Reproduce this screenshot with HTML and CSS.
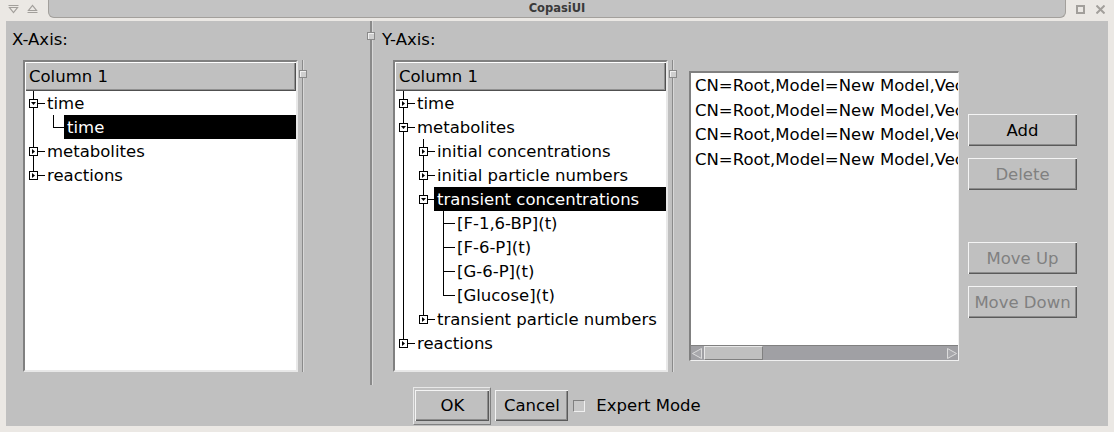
FILE: index.html
```html
<!DOCTYPE html>
<html>
<head>
<meta charset="utf-8">
<title>CopasiUI</title>
<link rel="stylesheet" href="styles.css">
</head>
<body>
<div class="window">
  <div class="titlebar">
    <div class="tb-side tb-left">
      <svg class="tb-icon" width="11" height="10" viewBox="0 0 11 10"><path d="M0.5 1.5h10M1.5 3.5h8l-4 5z" fill="none" stroke="#a29f9b" stroke-width="1.2"/></svg>
      <svg class="tb-icon" width="11" height="10" viewBox="0 0 11 10"><path d="M1.5 6.5h8l-4-5zM0.5 8.5h10" fill="none" stroke="#a29f9b" stroke-width="1.2"/></svg>
    </div>
    <div class="tb-tab"><span class="tb-title">CopasiUI</span></div>
    <div class="tb-side tb-right">
      <svg class="tb-icon" width="9" height="9" viewBox="0 0 9 9"><rect x="1" y="1" width="7" height="7" fill="none" stroke="#a29f9b" stroke-width="2"/></svg>
      <svg class="tb-icon" width="9" height="9" viewBox="0 0 9 9"><path d="M0.5 0.5l8 8M8.5 0.5l-8 8" stroke="#a29f9b" stroke-width="2"/></svg>
    </div>
  </div>
  <div class="frame">
    <div class="content">
      <div class="split-area">
        <div class="pane pane-x">
          <div class="axis-label">X-Axis:</div>
          <div class="pane-row">
            <div class="tree">
              <div class="tree-header">Column 1</div>
              <div class="tree-body">
                <div class="row">
                  <span class="g node first"><span class="box open"></span></span>
                  <span class="lbl">time</span>
                </div>
                <div class="row">
                  <span class="g pipe"></span>
                  <span class="g node last"></span>
                  <span class="lbl sel">time</span>
                </div>
                <div class="row">
                  <span class="g node"><span class="box closed"></span></span>
                  <span class="lbl">metabolites</span>
                </div>
                <div class="row">
                  <span class="g node last"><span class="box closed"></span></span>
                  <span class="lbl">reactions</span>
                </div>
              </div>
            </div>
            <div class="vhandle"><span class="knob"></span></div>
          </div>
        </div>
        <div class="split-handle"><span class="knob"></span></div>
        <div class="pane pane-y">
          <div class="axis-label">Y-Axis:</div>
          <div class="pane-row">
            <div class="tree">
              <div class="tree-header">Column 1</div>
              <div class="tree-body">
                <div class="row">
                  <span class="g node first"><span class="box closed"></span></span>
                  <span class="lbl">time</span>
                </div>
                <div class="row">
                  <span class="g node"><span class="box open"></span></span>
                  <span class="lbl">metabolites</span>
                </div>
                <div class="row">
                  <span class="g pipe"></span>
                  <span class="g node"><span class="box closed"></span></span>
                  <span class="lbl">initial concentrations</span>
                </div>
                <div class="row">
                  <span class="g pipe"></span>
                  <span class="g node"><span class="box closed"></span></span>
                  <span class="lbl">initial particle numbers</span>
                </div>
                <div class="row">
                  <span class="g pipe"></span>
                  <span class="g node"><span class="box open"></span></span>
                  <span class="lbl sel">transient concentrations</span>
                </div>
                <div class="row">
                  <span class="g pipe"></span>
                  <span class="g pipe"></span>
                  <span class="g node"></span>
                  <span class="lbl">[F-1,6-BP](t)</span>
                </div>
                <div class="row">
                  <span class="g pipe"></span>
                  <span class="g pipe"></span>
                  <span class="g node"></span>
                  <span class="lbl">[F-6-P](t)</span>
                </div>
                <div class="row">
                  <span class="g pipe"></span>
                  <span class="g pipe"></span>
                  <span class="g node"></span>
                  <span class="lbl">[G-6-P](t)</span>
                </div>
                <div class="row">
                  <span class="g pipe"></span>
                  <span class="g pipe"></span>
                  <span class="g node last"></span>
                  <span class="lbl">[Glucose](t)</span>
                </div>
                <div class="row">
                  <span class="g pipe"></span>
                  <span class="g node last"><span class="box closed"></span></span>
                  <span class="lbl">transient particle numbers</span>
                </div>
                <div class="row">
                  <span class="g node last"><span class="box closed"></span></span>
                  <span class="lbl">reactions</span>
                </div>
              </div>
            </div>
            <div class="vhandle"><span class="knob"></span></div>
            <div class="listbox">
              <div class="list-items">
                <div class="list-item"><span class="item-text">CN=Root,Model=New Model,Vector=Metabolites</span></div>
                <div class="list-item"><span class="item-text">CN=Root,Model=New Model,Vector=Metabolites</span></div>
                <div class="list-item"><span class="item-text">CN=Root,Model=New Model,Vector=Metabolites</span></div>
                <div class="list-item"><span class="item-text">CN=Root,Model=New Model,Vector=Metabolites</span></div>
              </div>
              <div class="hscroll">
                <span class="sb-arrow"><svg width="13" height="13" viewBox="0 0 13 13"><path d="M10.5 1.5v10l-9-5z" fill="#a8a8ac" stroke="#dcdcdc"/></svg></span>
                <span class="sb-slider"></span>
                <span class="sb-trough"></span>
                <span class="sb-arrow"><svg width="13" height="13" viewBox="0 0 13 13"><path d="M2.5 1.5v10l9-5z" fill="#a8a8ac" stroke="#dcdcdc"/></svg></span>
              </div>
            </div>
            <div class="side-buttons">
              <button class="btn">Add</button>
              <button class="btn disabled">Delete</button>
              <button class="btn disabled spaced">Move Up</button>
              <button class="btn disabled">Move Down</button>
            </div>
          </div>
        </div>
      </div>
      <div class="bottom-bar">
        <span class="default-frame"><button class="btn btn-ok">OK</button></span>
        <button class="btn btn-cancel">Cancel</button>
        <span class="check"></span>
        <span class="check-label">Expert Mode</span>
      </div>
    </div>
  </div>
</div>
</body>
</html>
```

FILE: styles.css
```css
* {
  box-sizing: border-box;
  margin: 0;
  padding: 0;
}

html, body {
  width: 1114px;
  height: 432px;
  overflow: hidden;
}

body {
  background: #c0c0c0;
  font-family: "DejaVu Sans", Verdana, sans-serif;
  font-size: 16.5px;
  color: #000;
}

.window {
  width: 1114px;
  height: 432px;
  display: flex;
  flex-direction: column;
  background: #ebe8e4;
}

/* ---------- title bar ---------- */
.titlebar {
  height: 21px;
  flex: none;
  display: flex;
}

.tb-side {
  width: 48px;
  flex: none;
  display: flex;
  align-items: center;
  padding-bottom: 3px;
}

.tb-left {
  padding-left: 8px;
  gap: 8px;
}

.tb-right {
  padding-left: 10px;
  gap: 11px;
}

.tb-icon {
  display: block;
  flex: none;
}

.tb-tab {
  flex: 1;
  height: 18px;
  background: #c3c3c3;
  border: 1px solid #a3a09c;
  border-top: none;
  border-radius: 0 0 6px 6px;
  display: flex;
  justify-content: center;
  align-items: center;
}

.tb-title {
  font-size: 11.5px;
  font-weight: bold;
  color: #3a3a3a;
  line-height: 17px;
}

/* ---------- frame ---------- */
.frame {
  flex: 1;
  display: flex;
  padding: 0 6px 6px 6px;
}

.content {
  flex: 1;
  background: #c0c0c0;
  display: flex;
  flex-direction: column;
}

.split-area {
  height: 364px;
  flex: none;
  display: flex;
}

.pane {
  padding: 6px 0 0 6px;
}

.pane-x {
  width: 360px;
  flex: none;
}

.pane-y {
  flex: 1;
}

.axis-label {
  height: 24px;
  line-height: 25px;
  white-space: nowrap;
}

.pane-row {
  display: flex;
  align-items: flex-start;
  margin: 9px 0 0 11px;
}

/* main splitter between X and Y */
.split-handle {
  width: 10px;
  flex: none;
  position: relative;
  display: flex;
  justify-content: center;
}

.split-handle::before {
  content: "";
  width: 2px;
  margin-left: -1px;
  height: 364px;
  background: #8a8a8a;
  box-shadow: 1px 0 0 #d8d8d8;
}

.knob {
  position: absolute;
  width: 8px;
  height: 8px;
  background: #cfcfcf;
  border: 1px solid #8a8a8a;
  box-shadow: inset 1px 1px 0 #f0f0f0;
}

.split-handle .knob {
  left: 1px;
  top: 11px;
}

/* small handle right of each tree */
.vhandle {
  width: 9px;
  height: 312px;
  flex: none;
  position: relative;
}

.vhandle::before {
  content: "";
  display: block;
  width: 1px;
  height: 312px;
  margin-left: 4px;
  background: #8a8a8a;
  box-shadow: 1px 0 0 #d8d8d8;
}

.vhandle .knob {
  left: 1px;
  top: 10px;
}

/* ---------- tree ---------- */
.tree {
  width: 275px;
  height: 312px;
  flex: none;
  background: #fff;
  border: 2px solid;
  border-color: #808080 #e8e8e8 #e8e8e8 #808080;
  display: flex;
  flex-direction: column;
  overflow: hidden;
}

.tree-header {
  height: 29px;
  line-height: 29px;
  flex: none;
  padding-left: 4px;
  background: #c0c0c0;
  box-shadow: inset 1px 1px 0 #ffffff, inset -1px -1px 0 #505050, inset -2px -2px 0 #909090;
  white-space: nowrap;
}

.tree-body {
  flex: 1;
}

.row {
  display: flex;
  height: 24px;
}

.g {
  width: 20px;
  height: 24px;
  flex: none;
  position: relative;
}

.pipe::before,
.node::before {
  content: "";
  position: absolute;
  left: 8px;
  top: 0;
  width: 1px;
  height: 24px;
  background: #000;
}

.node.last::before {
  height: 13px;
}

.node::after {
  content: "";
  position: absolute;
  left: 8px;
  top: 12px;
  width: 12px;
  height: 1px;
  background: #000;
}

.box {
  position: absolute;
  left: 4px;
  top: 8px;
  width: 9px;
  height: 9px;
  z-index: 2;
  background: #fff;
  border: 1px solid #000;
}

/* the arrow inside the expander box */
.box::after {
  content: "";
  position: absolute;
  background: #000;
}

.box.open::after {
  left: 1px;
  top: 2px;
  width: 5px;
  height: 3px;
  clip-path: polygon(0 0, 100% 0, 50% 100%);
}

.box.closed::after {
  left: 2px;
  top: 1px;
  width: 3px;
  height: 5px;
  clip-path: polygon(0 0, 100% 50%, 0 100%);
}

.lbl {
  margin-left: -1px;
  padding-left: 3px;
  height: 24px;
  line-height: 25px;
  white-space: nowrap;
}

.lbl.sel {
  flex: 1;
  background: #000;
  color: #fff;
}

/* ---------- list box ---------- */
.listbox {
  width: 270px;
  height: 290px;
  flex: none;
  margin: 11px 0 0 12px;
  background: #fff;
  border: 2px solid;
  border-color: #808080 #f0f0f0 #f0f0f0 #808080;
  border-right-width: 1px;
  border-bottom-width: 1px;
  display: flex;
  flex-direction: column;
  overflow: hidden;
}

.list-items {
  flex: 1;
  overflow: hidden;
  padding: 1px 0 0 4px;
}

.list-item {
  height: 24.5px;
  line-height: 24px;
  white-space: nowrap;
  overflow: hidden;
}

.hscroll {
  height: 15px;
  flex: none;
  display: flex;
  background: #a0a0a4;
  border-top: 1px solid #808080;
}

.sb-arrow {
  width: 13px;
  flex: none;
  display: flex;
  align-items: center;
  justify-content: center;
}

.sb-arrow svg {
  display: block;
}

.sb-slider {
  width: 59px;
  flex: none;
  background: #c0c0c0;
  border: 1px solid;
  border-color: #e8e8e8 #808080 #808080 #e8e8e8;
}

.sb-trough {
  flex: 1;
}

/* ---------- buttons ---------- */
.btn {
  font-family: inherit;
  font-size: 16.5px;
  color: #000;
  background: #c0c0c0;
  border: none;
  box-shadow: inset 1px 1px 0 #f4f4f4, inset -1px -1px 0 #5a5a5a, inset -2px -2px 0 #8c8c8c;
  line-height: 22px;
  padding-top: 1px;
  white-space: nowrap;
}

.btn.disabled {
  color: #808080;
}

.side-buttons {
  width: 109px;
  flex: none;
  margin: 54px 0 0 9px;
  display: flex;
  flex-direction: column;
  gap: 12px;
}

.side-buttons .btn {
  height: 32px;
}

.side-buttons .spaced {
  margin-top: 40px;
}

.bottom-bar {
  flex: 1;
  display: flex;
  justify-content: center;
  align-items: center;
}

.default-frame {
  width: 78px;
  height: 38px;
  display: flex;
  align-items: center;
  justify-content: center;
  border: 1px solid;
  border-color: #e8e8e8 #808080 #808080 #e8e8e8;
}

.btn-ok {
  width: 74px;
  height: 31px;
}

.btn-cancel {
  width: 73px;
  height: 31px;
  margin-left: 4px;
}

.check {
  width: 12px;
  height: 12px;
  margin-left: 5px;
  background: #c8c8c8;
  border: 1px solid;
  border-color: #808080 #f0f0f0 #f0f0f0 #808080;
}

.check-label {
  margin-left: 11px;
  line-height: 24px;
}
```
